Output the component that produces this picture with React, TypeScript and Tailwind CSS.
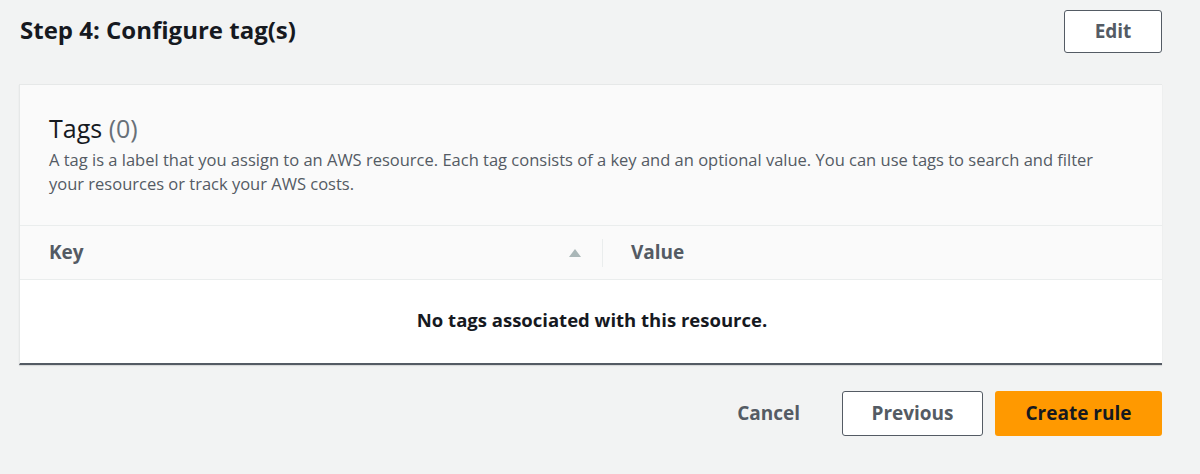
import React from "react";

const font = { fontFamily: '"Open Sans", "Noto Sans", Arial, sans-serif' };

export default function App() {
  return (
    <div
      className="w-[1200px] h-[474px] bg-[#f2f3f3] px-[19px] pt-[10px] text-[#16191f] overflow-hidden"
      style={font}
    >
      {/* Title row */}
      <div className="flex justify-between items-start pl-[1px]">
        <h2 className="text-[24px] font-bold leading-[40px]">Step 4: Configure tag(s)</h2>
        <button
          type="button"
          className="w-[98px] h-[43px] mr-[19px] bg-white border border-[#545b64] rounded-[3px] text-[19px] font-bold text-[#545b64]"
        >
          Edit
        </button>
      </div>

      {/* Tags card */}
      <div className="mt-[31px] w-[1143px] border-l border-t border-[#e6e8e8] border-b-2 border-b-[#545b64] shadow-[0_1px_1px_rgba(0,0,0,0.1)]">
        <div className="bg-[#fafafa] px-[29px] pt-[27px] pb-[29px]">
          <h3 className="text-[25px] leading-[32px]">
            Tags <span className="text-[#687078]">(0)</span>
          </h3>
          <p className="mt-[4px] w-[1075px] text-[16.5px] leading-[24px] text-[#545b64]">
            A tag is a label that you assign to an AWS resource. Each tag consists of a key and an optional value. You can use tags to search and filter your resources or track your AWS costs.
          </p>
        </div>

        {/* Table header */}
        <div className="flex items-center h-[55px] bg-[#fafafa] border-t border-b border-[#eaeded]">
          <div className="flex items-center justify-between w-[582px] pl-[29px] pr-[20px]">
            <span className="text-[19px] font-bold text-[#545b64]">Key</span>
            <svg width="14" height="10" viewBox="0 0 14 10">
              <path d="M7 1 L13 9 L1 9 Z" fill="#aab7b8" />
            </svg>
          </div>
          <div className="w-px h-[28px] bg-[#eaeded]" />
          <span className="pl-[28px] text-[19px] font-bold text-[#545b64]">Value</span>
        </div>

        {/* Empty body */}
        <div className="bg-white h-[83px] flex items-center justify-center pb-[4px]">
          <span className="text-[18.5px] font-bold text-[#16191f] pl-[2px]">No tags associated with this resource.</span>
        </div>
      </div>

      {/* Footer actions */}
      <div className="flex justify-end items-center gap-3 mt-[26px] pr-[19px]">
        <button type="button" className="px-[30px] h-[44px] text-[19px] font-bold text-[#545b64]">
          Cancel
        </button>
        <button
          type="button"
          className="w-[141px] h-[45px] bg-white border border-[#545b64] rounded-[3px] text-[19px] font-bold text-[#545b64]"
        >
          Previous
        </button>
        <button
          type="button"
          className="w-[167px] h-[45px] bg-[#ff9900] rounded-[3px] text-[19px] font-bold text-[#16191f]"
        >
          Create rule
        </button>
      </div>
    </div>
  );
}
